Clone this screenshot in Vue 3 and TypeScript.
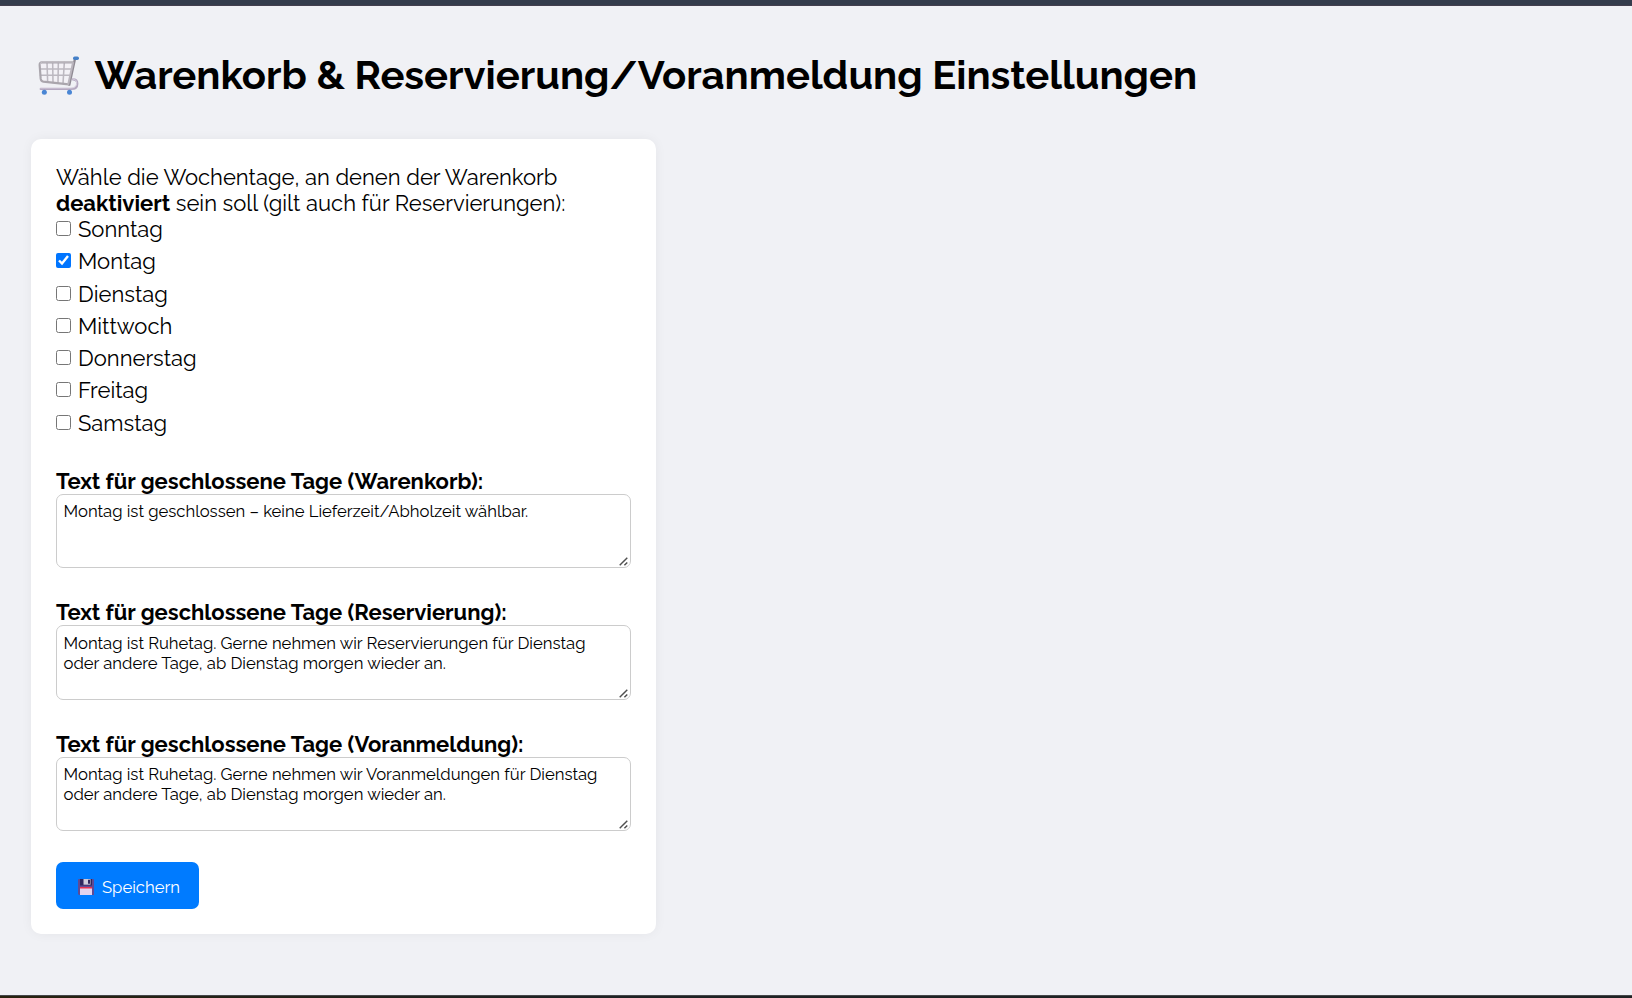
<script setup lang="ts">
import { reactive } from 'vue'

interface Day {
  name: string
  disabled: boolean
}

interface ClosedText {
  id: string
  label: string
  value: string
}

const days = reactive<Day[]>([
  { name: 'Sonntag', disabled: false },
  { name: 'Montag', disabled: true },
  { name: 'Dienstag', disabled: false },
  { name: 'Mittwoch', disabled: false },
  { name: 'Donnerstag', disabled: false },
  { name: 'Freitag', disabled: false },
  { name: 'Samstag', disabled: false },
])

const texts = reactive<ClosedText[]>([
  {
    id: 'cart',
    label: 'Text für geschlossene Tage (Warenkorb):',
    value: 'Montag ist geschlossen – keine Lieferzeit/Abholzeit wählbar.',
  },
  {
    id: 'reservation',
    label: 'Text für geschlossene Tage (Reservierung):',
    value: 'Montag ist Ruhetag. Gerne nehmen wir Reservierungen für Dienstag oder andere Tage, ab Dienstag morgen wieder an.',
  },
  {
    id: 'preorder',
    label: 'Text für geschlossene Tage (Voranmeldung):',
    value: 'Montag ist Ruhetag. Gerne nehmen wir Voranmeldungen für Dienstag oder andere Tage, ab Dienstag morgen wieder an.',
  },
])
</script>

<template>
  <div class="page">
    <div class="topbar"></div>
    <main class="content">
      <h1 class="title">
        <svg class="cart" viewBox="54 45 129 126" fill="none" stroke-linecap="round" stroke-linejoin="round">
          <path d="M64 67h92l-10 66-76-8q-7-1-8-8l-3-42q0-8 5-8z" fill="#f3f1f6" />
          <path d="M81 67l2 59M98 67l1 61M115 67l-1 63M133 67l-4 64M60 87h92M61 106h88" stroke="#bcb8c0" stroke-width="4.6" />
          <path d="M157 67H66q-8 0-7 9l3 40q1 8 8 9l76 8" stroke="#aaa6ad" stroke-width="6.5" />
          <path d="M156 66H67q-7 0-6 8" stroke="#c4c0c7" stroke-width="3" />
          <path d="M165 56l-17 78" stroke="#8f8a93" stroke-width="7" />
          <path d="M159 68l-14 64" stroke="#bbb6be" stroke-width="6" />
          <path d="M158 118q14 0 14 13 0 16-19 16H62" stroke="#b4a8c0" stroke-width="6.5" />
          <path d="M158 117q13 1 12 13-1 14-17 14H62" stroke="#d8d0df" stroke-width="3" />
          <circle cx="73" cy="157" r="7.5" fill="#4a86d4" />
          <circle cx="148.5" cy="157" r="7.5" fill="#4a86d4" />
          <rect x="159" y="49.5" width="18" height="10.5" rx="5" fill="#4480c8" />
        </svg>
        <span>Warenkorb &amp; Reservierung/Voranmeldung Einstellungen</span>
      </h1>

      <form class="card" @submit.prevent>
        <p class="intro">
          Wähle die Wochentage, an denen der Warenkorb <strong>deaktiviert</strong> sein soll (gilt auch für Reservierungen):
        </p>
        <div class="days">
          <label v-for="day in days" :key="day.name" class="day">
            <input v-model="day.disabled" type="checkbox" class="check" />
            <span>{{ day.name }}</span>
          </label>
        </div>

        <div v-for="text in texts" :key="text.id" class="field">
          <label class="field-label" :for="text.id">{{ text.label }}</label>
          <div class="area-wrap">
            <textarea :id="text.id" v-model="text.value" class="area" spellcheck="false"></textarea>
            <svg class="grip" viewBox="0 0 10 10" stroke="#505050" stroke-width="1.6">
              <path d="M.8 9.2L9.2.8M6 9.2L9.2 6" />
            </svg>
          </div>
        </div>

        <button class="save" type="submit">
          <svg class="disk" viewBox="0 0 16 16">
            <path d="M0 1q0-1 1-1h14q1 0 1 1v15H1l-1-1z" fill="#604a94" />
            <path d="M2 0h12v6.5H2z" fill="#30265f" />
            <path d="M5.500 0h7v5.700h-7z" fill="#d0cbdc" />
            <path d="M10 .8h2v4h-2z" fill="#30265f" />
            <path d="M2 8h12v2H2z" fill="#e8304f" />
            <path d="M2 9.500h12V16H2z" fill="#e2d2ee" />
          </svg>
          <span>Speichern</span>
        </button>
      </form>
    </main>
    <div class="bottombar"></div>
  </div>
</template>

<style>
html,
body {
  margin: 0;
  background: #f0f1f5;
}
</style>

<style scoped>
.page {
  display: flex;
  flex-direction: column;
  box-sizing: border-box;
  height: 998px;
  overflow: hidden;
  background: #f0f1f5;
  color: #000;
  font-family: Raleway, Lato, sans-serif;
  font-size: 22px;
  line-height: 26px;
}

.topbar {
  flex: none;
  height: 6px;
  box-sizing: border-box;
  background: #343c4c;
  border-bottom: 1px solid #433f4e;
}

.content {
  flex: 1;
  padding: 45px 31px 0;
}

.title {
  display: flex;
  align-items: flex-start;
  margin: 0 0 41px;
  padding-left: 7px;
  font-size: 40px;
  font-weight: 700;
  line-height: 47px;
  white-space: nowrap;
}

.cart {
  flex: none;
  width: 43px;
  height: 42px;
  margin: 4px 13.4px 0 0;
}

.card {
  box-sizing: border-box;
  width: 625px;
  height: 795px;
  padding: 25px;
  background: #fff;
  border-radius: 10px;
  box-shadow: 0 0 12px rgba(0, 0, 0, 0.05);
}

.intro {
  margin: 0;
}

.days {
  padding-bottom: 26.15px;
}

.day {
  display: flex;
  align-items: flex-start;
  height: 26px;
  padding-bottom: 6.25px;
}

.check {
  flex: none;
  width: 15px;
  height: 15px;
  margin: 5px 7px 0 0;
}

.field {
  margin-bottom: 31.25px;
}

.field-label {
  display: block;
  font-weight: 700;
}

.area-wrap {
  position: relative;
  display: flex;
}

.area {
  box-sizing: border-box;
  width: 575px;
  height: 74.25px;
  margin: 0;
  padding: 6.25px 6.5px;
  overflow: hidden;
  resize: none;
  background: #fff;
  border: 1px solid #ccc;
  border-radius: 7px;
  color: #000;
  font-family: inherit;
  font-size: 16.667px;
  line-height: 20px;
}

.grip {
  position: absolute;
  right: 3px;
  bottom: 2px;
  width: 9px;
  height: 9px;
}

.save {
  display: flex;
  align-items: center;
  width: 143px;
  height: 47px;
  padding: 2px 0 0 22px;
  background: #007bff;
  border: 0;
  border-radius: 7px;
  color: #fff;
  font-family: inherit;
  font-size: 16.667px;
  line-height: 20px;
}

.disk {
  width: 16px;
  height: 16px;
  margin-right: 8px;
}

.bottombar {
  flex: none;
  height: 3px;
  box-sizing: border-box;
  background: linear-gradient(90deg, #28220f, #1f2223 35%);
  border-top: 1px solid #45474a;
}
</style>
